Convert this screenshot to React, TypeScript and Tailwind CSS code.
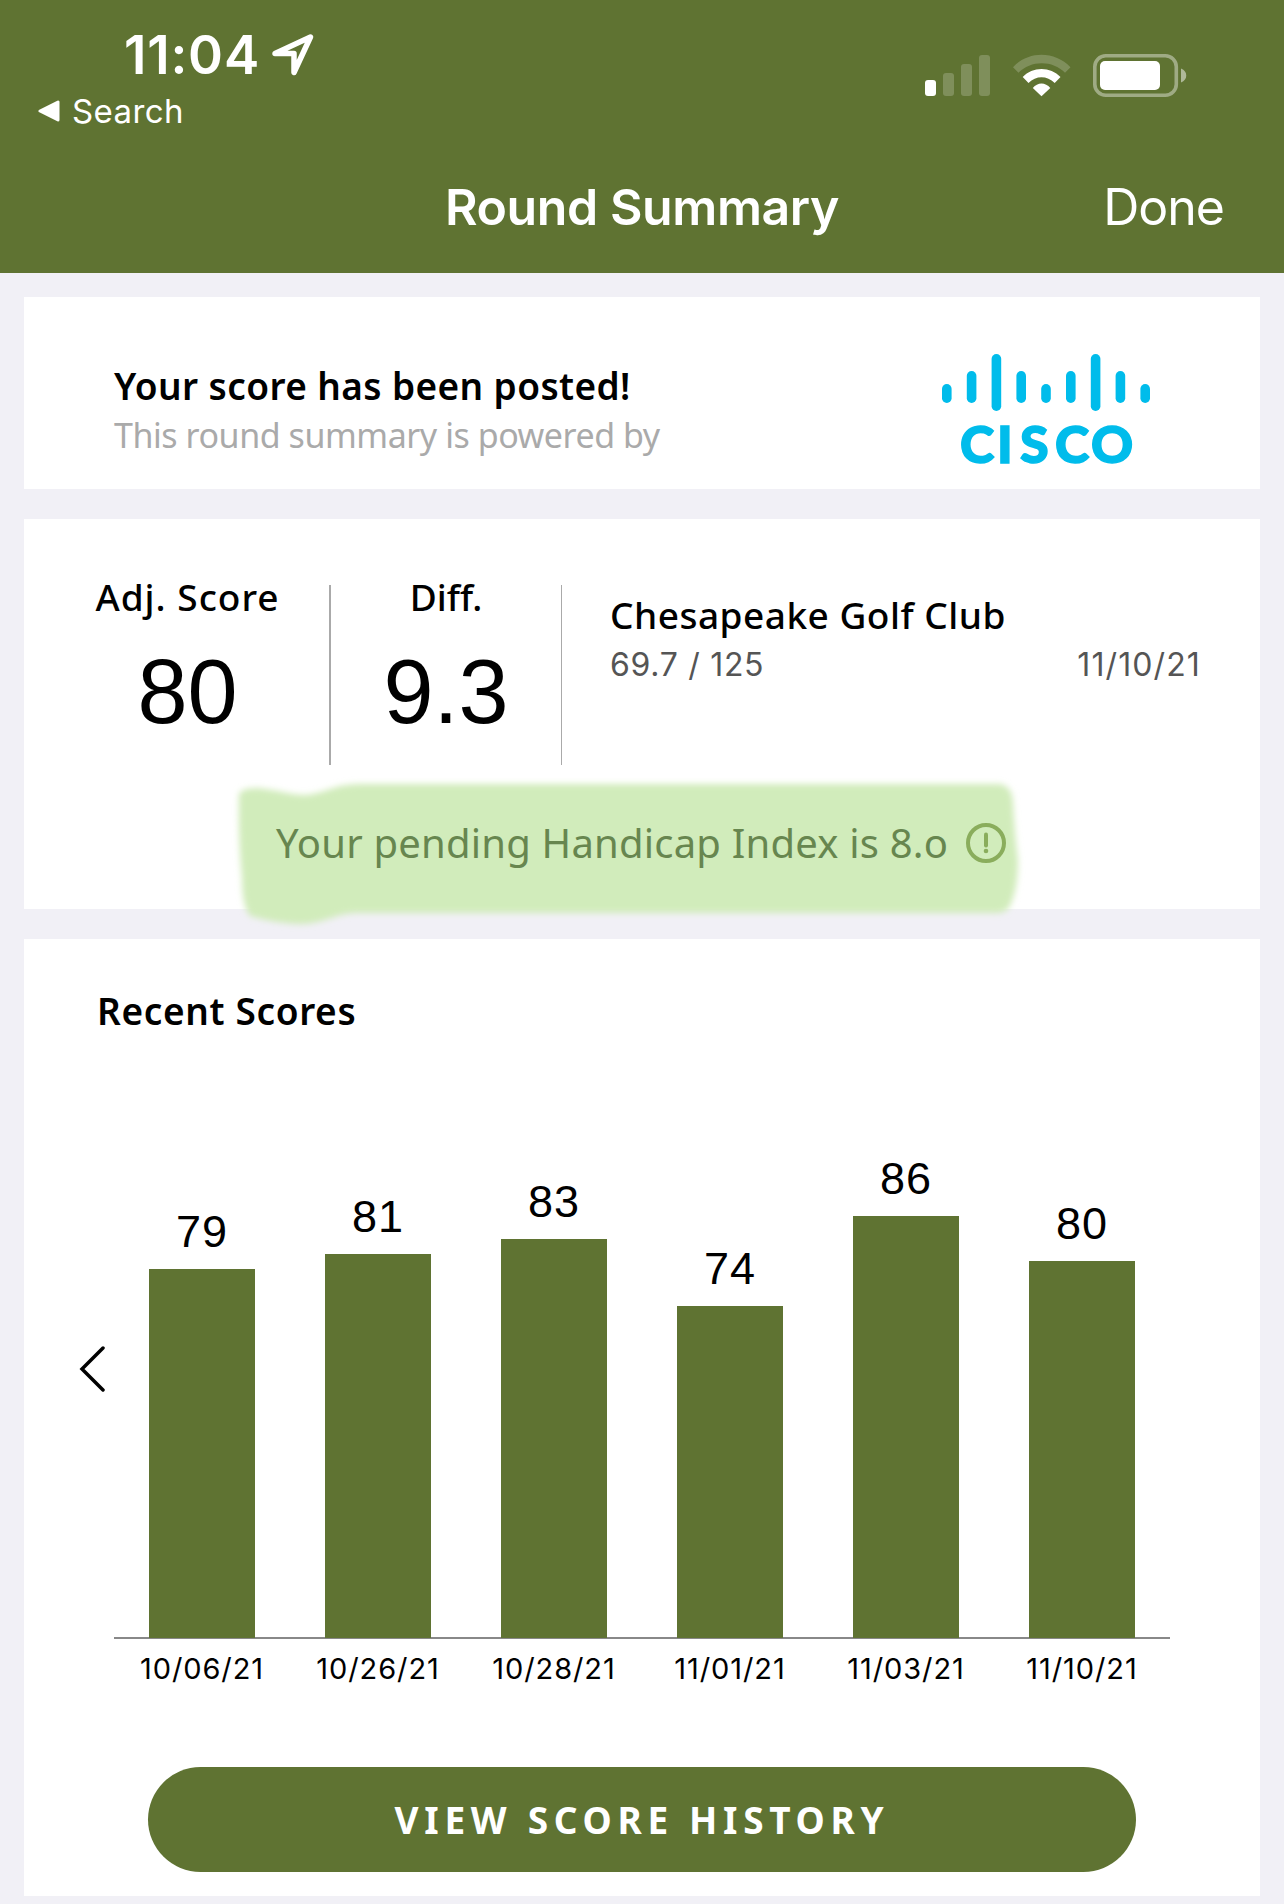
const scores = [
    { date: '10/06/21', score: 79 },
    { date: '10/26/21', score: 81 },
    { date: '10/28/21', score: 83 },
    { date: '11/01/21', score: 74 },
    { date: '11/03/21', score: 86 },
    { date: '11/10/21', score: 80 },
];

// the chart axis does not start at zero
const barHeight = (score: number) => Math.round((score - 30) * 7.55 - 0.7);

function StatusIcons() {
    return (
        <svg width="264" height="44" viewBox="0 0 264 44" fill="#fff">
            <rect x="0" y="26" width="11" height="16" rx="3" />
            <g fillOpacity="0.2">
                <rect x="18" y="19" width="11" height="23" rx="3" />
                <rect x="36" y="10" width="11" height="32" rx="3" />
                <rect x="54" y="1" width="11" height="41" rx="3" />
            </g>
            <path fillOpacity="0.2" d="M88 13.200C103 -3.500 130 -3.500 145.500 13.200L140 18.800C128 6 105.500 6 93.500 18.800Z" />
            <path d="M97.700 23C107.500 12.200 125.500 12.200 135.500 23L129.700 29C122 21.200 111 21.200 103.500 29Z" />
            <path d="M107.800 34C112.500 28 120.500 28 125.300 34L116.500 42.300Z" />
            <rect x="169.800" y="1.800" width="81.500" height="39.500" rx="11" fill="none" stroke="#fff" strokeOpacity="0.4" strokeWidth="3.600" />
            <rect x="175" y="7" width="60" height="29" rx="5" />
            <path fillOpacity="0.5" d="M256 14.500C263 17 263 26 256 28.500Z" />
        </svg>
    );
}

function CiscoLogo() {
    const bars = [
        [31, 19], [18, 32], [1, 57], [18, 32], [31, 19], [18, 32], [1, 57], [18, 32], [31, 19],
    ];
    return (
        <svg width="208" height="130" viewBox="0 0 208 130" fill="#00bceb">
            {bars.map(([y, h], idx) => (
                <rect key={idx} x={idx * 24.8} y={y} width="9.600" height={h} rx="4.800" />
            ))}
            <text x="18 55 78 113 149" y="110" stroke="#00bceb" strokeWidth="1.500" className="font-['Lato'] text-[52px] font-black">CISCO</text>
        </svg>
    );
}

export default function App() {
    return (
        <div className="flex h-[1904px] w-[1284px] flex-col overflow-hidden bg-[#f1f0f6] font-['Noto_Sans',sans-serif] text-black">
            {/* Header */}
            <header className="flex h-[273px] shrink-0 flex-col bg-[#5f7332] font-['Inter',sans-serif] text-white">
                <div className="flex h-[136px] justify-between">
                    <div>
                        <div className="flex items-center gap-[12px] pt-[25px] pl-[124px]">
                            <span className="text-[53px] leading-[60px] font-semibold tracking-[0.8px]">11:04</span>
                            <svg width="42" height="42" viewBox="0 0 42 42" fill="none" stroke="#fff" strokeWidth="5.500" strokeLinejoin="round">
                                <path d="M3 19.500L38.500 3L22 38.500V19.500Z" />
                            </svg>
                        </div>
                        <div className="flex items-center gap-3 pt-[6px] pl-[38px]">
                            <svg width="22" height="22" viewBox="0 0 22 22" fill="#fff" stroke="#fff" strokeWidth="3" strokeLinejoin="round">
                                <path d="M2 11L20 2V20Z" />
                            </svg>
                            <span className="text-[33px] leading-10 tracking-[0.4px]">Search</span>
                        </div>
                    </div>
                    <div className="pt-[54px] pr-[95px]">
                        <StatusIcons />
                    </div>
                </div>
                <div className="grid grid-cols-3 items-center pt-[41px] text-[50px] leading-[60px]">
                    <h1 className="col-start-2 text-center font-semibold tracking-[-0.4px] whitespace-nowrap">Round Summary</h1>
                    <span className="pr-[60px] text-right tracking-[-1px]">Done</span>
                </div>
            </header>

            <main className="flex flex-col px-6 pt-6">
                {/* Sponsor */}
                <section className="flex h-[192px] justify-between bg-white pl-[90px]">
                    <div className="pt-[65px]">
                        <h2 className="text-[37px] leading-[48px] font-semibold tracking-[0.4px]">Your score has been posted!</h2>
                        <p className="text-[34px] leading-[50px] tracking-[-0.45px] text-[#aaa]">This round summary is powered by</p>
                    </div>
                    <div className="pt-14 pr-[110px]">
                        <CiscoLogo />
                    </div>
                </section>

                {/* Round */}
                <section className="mt-[30px] h-[390px] bg-white">
                    <div className="flex h-[246px] pt-[66px]">
                        <div className="flex h-[180px] w-[307px] flex-col items-center border-r-2 border-[#aaa] pl-[22px]">
                            <span className="mt-[-12px] text-[37px] leading-[48px] font-medium tracking-[1px]">Adj. Score</span>
                            <span className="mt-[21px] font-['Liberation_Sans'] text-[90px] leading-[100px]">80</span>
                        </div>
                        <div className="flex h-[180px] w-[231px] flex-col items-center border-r border-[#aaa]">
                            <span className="mt-[-12px] text-[37px] leading-[48px] font-medium">Diff.</span>
                            <span className="mt-[21px] font-['Liberation_Sans'] text-[90px] leading-[100px]">9.3</span>
                        </div>
                        <div className="flex-1 pt-[6px] pr-[59px] pl-[48px]">
                            <div className="text-[37px] leading-[48px] font-medium tracking-[0.5px]">Chesapeake Golf Club</div>
                            <div className="flex justify-between pt-px font-['Inter'] text-[32px] leading-[50px] text-[#555]">
                                <span className="tracking-[0.7px]">69.7 / 125</span>
                                <span className="tracking-[1.1px]">11/10/21</span>
                            </div>
                        </div>
                    </div>
                    <div className="relative flex h-[144px] items-center pt-[12px] pl-[252px]">
                        {/* highlighter stroke */}
                        <svg className="absolute top-[3px] left-[204px]" width="810" height="170" viewBox="0 0 810 170">
                            <defs>
                                <filter id="soft" x="-5%" y="-20%" width="110%" height="140%">
                                    <feGaussianBlur stdDeviation="3" />
                                </filter>
                            </defs>
                            <path
                                d="M11 26Q14 20 30 20C50 22 62 27 78 27C98 25 104 17 130 16H772Q784 18 785 34Q787 70 790 92Q790 125 780 141Q776 145 768 145H130C108 145 98 155 75 156C50 156 30 150 22 148Q14 138 14 110Q10 70 11 26Z"
                                fill="#d1ecbb"
                                filter="url(#soft)"
                            />
                        </svg>
                        <span className="relative text-[40px] leading-[50px] tracking-[0.2px] text-[#67864f]">Your pending Handicap Index is 8.o</span>
                        <svg className="relative ml-[18px]" width="40" height="40" viewBox="0 0 40 40" fill="none" stroke="#8aad5c" strokeWidth="4" strokeLinecap="round">
                            <circle cx="20" cy="20" r="18" />
                            <path d="M20 11.500V22.500" />
                            <circle cx="20" cy="28" r="2.300" fill="#8aad5c" stroke="none" />
                        </svg>
                    </div>
                </section>

                {/* Recent scores */}
                <section className="mt-[30px] flex h-[957px] flex-col bg-white">
                    <h2 className="pt-[48px] pl-[73px] text-[37px] leading-[48px] font-semibold tracking-[0.65px]">Recent Scores</h2>
                    <div className="flex pl-[54px]">
                        <svg className="mt-[309px] mr-[9px]" width="27" height="50" viewBox="0 0 27 50" fill="none" stroke="#000" strokeWidth="3.500" strokeLinecap="round">
                            <path d="M25 4L4 25L25 46" />
                        </svg>
                        <div className="w-[1056px]">
                            <div className="flex h-[604px] items-end border-b-2 border-[#888]">
                                {scores.map((s) => (
                                    <div key={s.date} className="flex flex-1 flex-col items-center">
                                        <span className="mb-[5px] font-['Liberation_Sans'] text-[45px] leading-[64px] tracking-[1px]">{s.score}</span>
                                        <div className="mb-[-1px] w-[106px] bg-[#5f7332]" style={{ height: barHeight(s.score) }}></div>
                                    </div>
                                ))}
                            </div>
                            <div className="flex pt-[10px] font-['Inter'] text-[29px] leading-[40px] tracking-[0.9px]">
                                {scores.map((s) => (
                                    <span key={s.date} className="flex-1 text-center">{s.date}</span>
                                ))}
                            </div>
                        </div>
                    </div>
                    <button className="mt-[78px] ml-[124px] h-[105px] w-[988px] rounded-full bg-[#5f7332] pt-px text-[37px] font-bold tracking-[5.7px] text-white">
                        VIEW SCORE HISTORY
                    </button>
                </section>
            </main>
        </div>
    );
}
